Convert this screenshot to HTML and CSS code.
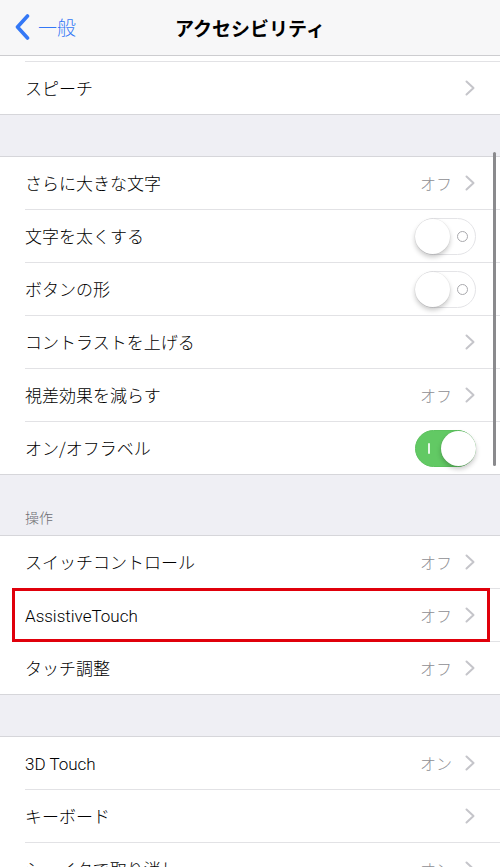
FILE: index.html
```html
<!DOCTYPE html>
<html lang="ja">
<head>
<meta charset="utf-8">
<title>アクセシビリティ</title>
<link rel="stylesheet" href="styles.css">
</head>
<body>
<div class="screen">
  <header class="nav">
    <div class="back">
      <svg class="back-chevron" viewBox="0 0 15 26" width="15" height="26"><polyline points="12.5,2 2.5,13 12.5,24" /></svg>
      <span class="back-text">一般</span>
    </div>
    <div class="title">アクセシビリティ</div>
    <div class="nav-spacer"></div>
  </header>

  <main class="content">
    <section class="group group-first">
      <div class="row stub"></div>
      <div class="row"><span class="label">スピーチ</span><span class="acc"><svg class="chev" viewBox="0 0 10 16" width="10" height="16"><polyline points="1.5,1.5 8.5,8 1.5,14.5"/></svg></span></div>
    </section>

    <div class="gap"></div>

    <section class="group">
      <div class="row"><span class="label">さらに大きな文字</span><span class="acc"><span class="value">オフ</span><svg class="chev" viewBox="0 0 10 16" width="10" height="16"><polyline points="1.5,1.5 8.5,8 1.5,14.5"/></svg></span></div>
      <div class="row"><span class="label">文字を太くする</span><span class="switch off"><span class="knob"></span><span class="off-mark"></span></span></div>
      <div class="row"><span class="label">ボタンの形</span><span class="switch off"><span class="knob"></span><span class="off-mark"></span></span></div>
      <div class="row"><span class="label">コントラストを上げる</span><span class="acc"><svg class="chev" viewBox="0 0 10 16" width="10" height="16"><polyline points="1.5,1.5 8.5,8 1.5,14.5"/></svg></span></div>
      <div class="row"><span class="label">視差効果を減らす</span><span class="acc"><span class="value">オフ</span><svg class="chev" viewBox="0 0 10 16" width="10" height="16"><polyline points="1.5,1.5 8.5,8 1.5,14.5"/></svg></span></div>
      <div class="row"><span class="label">オン/オフラベル</span><span class="switch on"><span class="on-mark"></span><span class="knob"></span></span></div>
    </section>

    <div class="section-header">操作</div>

    <section class="group">
      <div class="row"><span class="label">スイッチコントロール</span><span class="acc"><span class="value">オフ</span><svg class="chev" viewBox="0 0 10 16" width="10" height="16"><polyline points="1.5,1.5 8.5,8 1.5,14.5"/></svg></span></div>
      <div class="row highlighted"><span class="label latin">AssistiveTouch</span><span class="acc"><span class="value">オフ</span><svg class="chev" viewBox="0 0 10 16" width="10" height="16"><polyline points="1.5,1.5 8.5,8 1.5,14.5"/></svg></span><span class="red-box"></span></div>
      <div class="row"><span class="label">タッチ調整</span><span class="acc"><span class="value">オフ</span><svg class="chev" viewBox="0 0 10 16" width="10" height="16"><polyline points="1.5,1.5 8.5,8 1.5,14.5"/></svg></span></div>
    </section>

    <div class="gap"></div>

    <section class="group">
      <div class="row"><span class="label latin">3D Touch</span><span class="acc"><span class="value">オン</span><svg class="chev" viewBox="0 0 10 16" width="10" height="16"><polyline points="1.5,1.5 8.5,8 1.5,14.5"/></svg></span></div>
      <div class="row"><span class="label">キーボード</span><span class="acc"><svg class="chev" viewBox="0 0 10 16" width="10" height="16"><polyline points="1.5,1.5 8.5,8 1.5,14.5"/></svg></span></div>
      <div class="row"><span class="label">シェイクで取り消し</span><span class="acc"><span class="value">オン</span><svg class="chev" viewBox="0 0 10 16" width="10" height="16"><polyline points="1.5,1.5 8.5,8 1.5,14.5"/></svg></span></div>
    </section>
  </main>

  <div class="scrollbar"></div>
</div>
</body>
</html>
```

FILE: styles.css
```css
* { box-sizing: border-box; }

html, body {
  margin: 0;
  padding: 0;
  background: #efeff4;
}

body {
  font-family: "Liberation Sans", "Noto Sans CJK JP", sans-serif;
  color: #000;
}

.screen {
  position: relative;
  width: 500px;
  height: 867px;
  overflow: hidden;
  background: #efeff4;
}

/* Navigation bar */
.nav {
  height: 56px;
  background: #f7f7f8;
  border-bottom: 1px solid #cdcdd0;
  display: grid;
  grid-template-columns: 1fr auto 1fr;
  align-items: center;
  padding-bottom: 1px;
}

.back {
  display: flex;
  align-items: center;
  padding-left: 15px;
  color: #3478f6;
}

.back-chevron {
  fill: none;
  stroke: #3478f6;
  stroke-width: 3.6;
  stroke-linecap: round;
  stroke-linejoin: round;
}

.back-text {
  margin-left: 8px;
  font-family: "Noto Sans CJK JP", sans-serif;
  font-size: 19px;
  line-height: 24px;
  font-weight: 300;
}

.title {
  font-family: "Noto Sans CJK JP", sans-serif;
  font-size: 19px;
  font-weight: bold;
  line-height: 24px;
  margin-top: 1px;
}

/* Groups */
.group {
  background: #fff;
  border-top: 1px solid #d6d6da;
  border-bottom: 1px solid #d6d6da;
}

.group-first {
  border-top: none;
}

.row {
  position: relative;
  display: flex;
  align-items: center;
  justify-content: space-between;
  height: 53px;
  margin-left: 25px;
  padding-right: 25px;
  border-bottom: 1px solid #e2e2e5;
}

.row:last-child {
  border-bottom: none;
  height: 52px;
}

.row.stub {
  height: 6px;
  border-bottom: 1px solid #e2e2e5;
}

.label {
  font-family: "Noto Sans CJK JP", sans-serif;
  font-size: 17px;
  line-height: 22px;
  font-weight: 300;
  white-space: nowrap;
}

.label.latin {
  font-family: Roboto, "Liberation Sans", sans-serif;
  font-size: 17px;
  font-weight: 300;
  margin-top: 1px;
}

.acc {
  display: flex;
  align-items: center;
  gap: 13px;
}

.value {
  font-family: "Noto Sans CJK JP", sans-serif;
  font-size: 16px;
  line-height: 20px;
  font-weight: 300;
  color: #8e8e93;
}

.chev {
  fill: none;
  stroke: #c5c5ca;
  stroke-width: 2;
  stroke-linecap: round;
  stroke-linejoin: round;
}

/* Switches */
.switch {
  display: flex;
  align-items: center;
  justify-content: space-between;
  width: 61px;
  height: 37px;
  border-radius: 19px;
  margin-right: -1px;
}

.switch.off {
  background: #fff;
  border: 1.5px solid #e4e4e7;
  padding-right: 7px;
}

.switch.on {
  background: #62c964;
  border: 1.5px solid #5cc25e;
  padding-left: 12px;
}

.knob {
  width: 35px;
  height: 35px;
  border-radius: 50%;
  background: #fff;
  box-shadow: 0 3px 5px rgba(0, 0, 0, 0.22), 0 0 0 0.5px rgba(0, 0, 0, 0.06);
}

.switch.off .knob { margin-left: -1px; }
.switch.on .knob { margin-right: -1px; }

.off-mark {
  width: 11px;
  height: 11px;
  border-radius: 50%;
  border: 1.5px solid #a9a9ad;
}

.on-mark {
  width: 2px;
  height: 11px;
  background: rgba(255, 255, 255, 0.85);
  border-radius: 1px;
}

/* Gaps & headers */
.gap {
  height: 41px;
}

.section-header {
  height: 60px;
  display: flex;
  align-items: flex-end;
  padding-left: 25px;
  padding-bottom: 9px;
  font-family: "Noto Sans CJK JP", sans-serif;
  font-size: 14px;
  line-height: 18px;
  font-weight: 300;
  color: #6d6d72;
}

/* Highlight overlay */
.red-box {
  position: absolute;
  top: -1px;
  bottom: -1px;
  left: -13px;
  right: 10px;
  border: 3px solid #e0000b;
  pointer-events: none;
}

/* Scroll indicator overlay */
.scrollbar {
  position: absolute;
  top: 152px;
  right: 4px;
  width: 3px;
  height: 314px;
  border-radius: 2px;
  background: #8a8a8d;
}
```
